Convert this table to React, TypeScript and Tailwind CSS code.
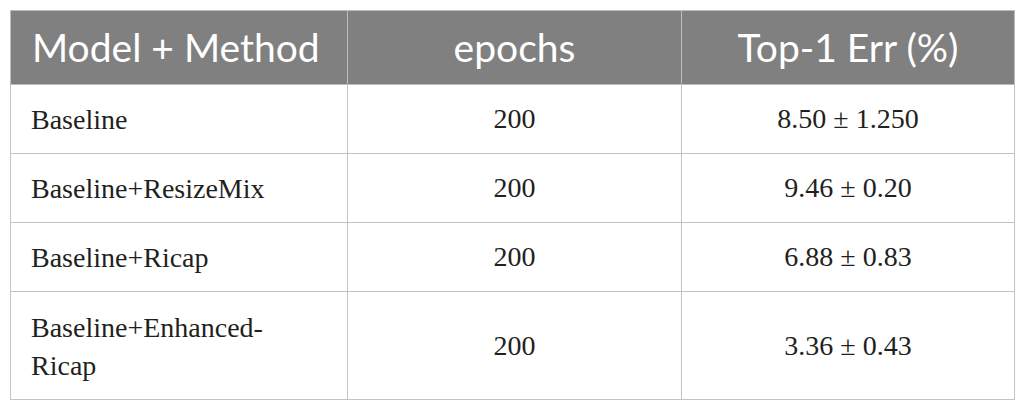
import React from "react";

const rows: { name: React.ReactNode; epochs: string; err: string; tall?: boolean }[] = [
  { name: "Baseline", epochs: "200", err: "8.50 ± 1.250" },
  { name: "Baseline+ResizeMix", epochs: "200", err: "9.46 ± 0.20" },
  { name: "Baseline+Ricap", epochs: "200", err: "6.88 ± 0.83" },
  {
    name: (
      <>
        Baseline+Enhanced-
        <br />
        Ricap
      </>
    ),
    epochs: "200",
    err: "3.36 ± 0.43",
    tall: true,
  },
];

export default function App() {
  return (
    <div className="w-[1025px] h-[412px] bg-white pt-[10px] pl-[10px]">
      <table className="w-[1004px] border-collapse table-fixed">
        <colgroup>
          <col className="w-[337px]" />
          <col className="w-[334px]" />
          <col className="w-[333px]" />
        </colgroup>
        <thead>
          <tr className="h-[74px] bg-[#808080] text-white font-['Lato',sans-serif] text-[39px]">
            <th className="border border-[#bdbdbd] text-left font-normal pl-[21px]">Model + Method</th>
            <th className="border border-[#bdbdbd] text-center font-normal">epochs</th>
            <th className="border border-[#bdbdbd] text-center font-normal">Top-1 Err (%)</th>
          </tr>
        </thead>
        <tbody className="font-['Liberation_Serif',serif] text-[28px] text-[#231f20]">
          {rows.map((r, i) => (
            <tr key={i} className={r.tall ? "h-[108px]" : "h-[69px]"}>
              <td className="border border-[#c4c4c4] pl-[20px] pt-[2px] leading-[38px]">{r.name}</td>
              <td className="border border-[#c4c4c4] text-center">{r.epochs}</td>
              <td className="border border-[#c4c4c4] text-center">{r.err}</td>
            </tr>
          ))}
        </tbody>
      </table>
    </div>
  );
}
